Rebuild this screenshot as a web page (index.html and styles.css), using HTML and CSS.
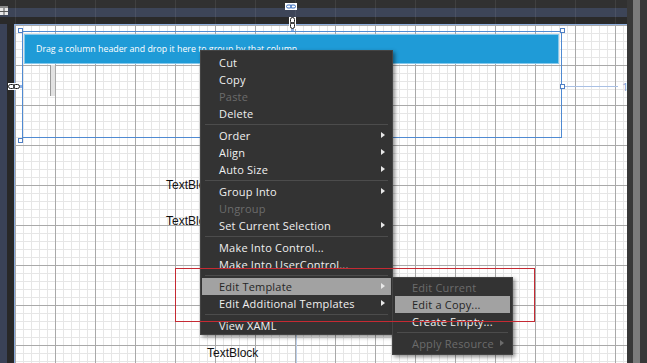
FILE: index.html
```html
<!DOCTYPE html>
<html lang="en">
<head>
    <meta charset="UTF-8">
    <title>Designer - Edit Template</title>
    <link rel="stylesheet" href="styles.css">
</head>
<body>
    <div class="designer">
        <header class="topbar">
            <div class="band band-top"></div>
            <div class="band band-mid">
                <svg class="grid-icon" width="8" height="9" viewBox="0 0 8 9">
                    <rect x="0" y="0" width="8" height="2" fill="#8a8a8a"/>
                    <rect x="0" y="2" width="8" height="7" fill="#e8e8e8"/>
                    <rect x="3.5" y="2" width="1" height="7" fill="#555"/>
                    <rect x="0" y="5" width="8" height="1" fill="#555"/>
                </svg>
            </div>
            <div class="band band-low"></div>
        </header>

        <aside class="leftbar"></aside>

        <main class="canvas">
            <div class="element selection">
                <div class="group-panel">Drag a column header and drop it here to group by that column</div>
                <div class="row-indicator"></div>

                <span class="handle h-tl"></span>
                <span class="handle h-tr"></span>
                <span class="handle h-mr"></span>
                <span class="handle h-bl"></span>

                <span class="margin-line"></span>
                <span class="margin-value">1</span>

                <span class="link-badge">
                    <svg width="12" height="7" viewBox="0 0 12 7">
                        <rect x="0" y="0" width="12" height="7" fill="#fff"/>
                        <path d="M3 2h2a1.5 1.5 0 0 1 0 3H3a1.5 1.5 0 0 1 0-3zM7 2h2a1.5 1.5 0 0 1 0 3H7a1.5 1.5 0 0 1 0-3z" fill="none" stroke="#3b6fc0" stroke-width="1"/>
                    </svg>
                </span>
                <span class="chain chain-top">
                    <svg width="7" height="14" viewBox="0 0 7 14">
                        <rect x="0" y="0" width="7" height="12" fill="#fff"/>
                        <rect x="1.5" y="0.5" width="4" height="6" rx="2" fill="none" stroke="#1a1a1a"/>
                        <rect x="1.5" y="5.5" width="4" height="6" rx="2" fill="none" stroke="#1a1a1a"/>
                        <rect x="2" y="12" width="3" height="2" fill="#8fb2e6"/>
                    </svg>
                </span>
                <span class="chain chain-left">
                    <svg width="14" height="7" viewBox="0 0 14 7">
                        <rect x="0" y="0" width="12" height="7" fill="#fff"/>
                        <rect x="0.5" y="1.5" width="6" height="4" rx="2" fill="none" stroke="#1a1a1a"/>
                        <rect x="5.5" y="1.5" width="6" height="4" rx="2" fill="none" stroke="#1a1a1a"/>
                        <rect x="12" y="2" width="2" height="3" fill="#8fb2e6"/>
                    </svg>
                </span>
            </div>

            <span class="element textblock tb-1">TextBlock</span>
            <span class="element textblock tb-2">TextBlock</span>
            <span class="element textblock tb-3">TextBlock</span>
            <span class="element guide"></span>
        </main>

        <aside class="scrollbar"><div class="track"></div></aside>
    </div>

    <div class="menu context-menu">
        <div class="item">Cut</div>
        <div class="item">Copy</div>
        <div class="item disabled">Paste</div>
        <div class="item">Delete</div>
        <div class="sep"></div>
        <div class="item sub">Order</div>
        <div class="item sub">Align</div>
        <div class="item sub">Auto Size</div>
        <div class="sep"></div>
        <div class="item sub">Group Into</div>
        <div class="item disabled">Ungroup</div>
        <div class="item sub">Set Current Selection</div>
        <div class="sep"></div>
        <div class="item">Make Into Control...</div>
        <div class="item">Make Into UserControl...</div>
        <div class="sep"></div>
        <div class="item sub active">Edit Template</div>
        <div class="item sub">Edit Additional Templates</div>
        <div class="sep"></div>
        <div class="item">View XAML</div>
    </div>

    <div class="menu submenu">
        <div class="item disabled">Edit Current</div>
        <div class="item active">Edit a Copy...</div>
        <div class="item">Create Empty...</div>
        <div class="sep"></div>
        <div class="item sub disabled">Apply Resource</div>
    </div>

    <div class="callout"></div>
</body>
</html>
```

FILE: styles.css
```css
* {
    box-sizing: border-box;
}

body {
    margin: 0;
    width: 647px;
    height: 363px;
    overflow: hidden;
    position: relative;
    background: #2d2d2d;
    font-family: 'Open Sans', 'Liberation Sans', sans-serif;
}

.designer {
    display: grid;
    grid-template-columns: 15px 612px 20px;
    grid-template-rows: 24px 339px;
}

/* top ruler bands */
.topbar {
    grid-row: 1;
    grid-column: 1 / 3;
    display: flex;
    flex-direction: column;
}

.band {
    background-image: linear-gradient(to right, rgba(255,255,255,0.07) 1px, transparent 1px);
    background-size: 40px 100%;
    background-position: 15px 0;
}

.band-top {
    height: 8px;
    background-color: #313131;
}

.band-mid {
    height: 9px;
    background-color: #3d4558;
}

.band-low {
    height: 7px;
    background-color: #2a2a2a;
}

.grid-icon {
    display: block;
    margin-top: -2px;
}

.leftbar {
    grid-row: 2;
    grid-column: 1;
    background: linear-gradient(to right, #3a4257 0, #3a4257 7px, #282828 7px, #282828 14px);
    border-right: 1px solid #86a9dc;
}

.scrollbar {
    grid-row: 1 / 3;
    grid-column: 3;
    display: flex;
    background: #383838;
    padding-left: 6px;
}

.track {
    width: 7px;
    background: #7b7b7b;
}

/* design surface */
.canvas {
    grid-row: 2;
    grid-column: 2;
    position: relative;
    background-color: #fff;
    background-image:
        linear-gradient(to right, #a9a9a9 1px, transparent 1px),
        linear-gradient(to bottom, #a9a9a9 1px, transparent 1px),
        linear-gradient(to right, #e6e6e6 1px, transparent 1px),
        linear-gradient(to bottom, #e6e6e6 1px, transparent 1px);
    background-size: 40px 40px, 40px 40px, 8px 8px, 8px 8px;
    background-position: 0 0, 0 1px, 0 0, 0 1px;
    box-shadow: inset 0 1px 0 #8fb0e0;
}

.element {
    position: absolute;
}

.selection {
    left: 7px;
    top: 7px;
    width: 540px;
    height: 107px;
    border: 1px solid #4f8ad2;
    padding: 2px 2px 0 1px;
}

.group-panel {
    height: 30px;
    line-height: 28px;
    padding-left: 11px;
    background: #1f9bd7;
    border: 1px solid #86c9ec;
    color: #fff;
    font-size: 8.8px;
    white-space: nowrap;
}

.row-indicator {
    width: 5px;
    height: 31px;
    margin: 1px 0 0 26px;
    background: #e2e2e2;
    border-left: 1px solid #9a9a9a;
}

.handle {
    position: absolute;
    width: 5px;
    height: 5px;
    background: #fff;
    border: 1px solid #4f7fc4;
}

.h-tl { left: -5px; top: -4px; }
.h-tr { left: 537px; top: -4px; }
.h-mr { left: 537px; top: 52px; }
.h-bl { left: -5px; top: 106px; }

.margin-line {
    position: absolute;
    left: 542px;
    top: 54px;
    width: 53px;
    height: 1px;
    background: #a9c0e4;
}

.margin-value {
    position: absolute;
    left: 599px;
    top: 47px;
    font-size: 11px;
    color: #7d9ed4;
}

.link-badge {
    position: absolute;
    left: 262px;
    top: -29px;
    line-height: 0;
}

.chain {
    position: absolute;
    line-height: 0;
}

.chain-top { left: 266px; top: -15px; }
.chain-left { left: -15px; top: 51px; }

.textblock {
    font-family: 'Liberation Sans', Arial, sans-serif;
    font-size: 12px;
    line-height: 14px;
    color: #111;
}

.tb-1 { left: 151px; top: 154px; }
.tb-2 { left: 151px; top: 190px; }
.tb-3 { left: 192px; top: 322px; }

.guide {
    left: 281px;
    top: 290px;
    width: 1px;
    height: 49px;
    background: #bcd0ec;
}

/* context menu */
.menu {
    position: absolute;
    background: #333;
    border: 1px solid #444;
    box-shadow: 2px 2px 4px rgba(0,0,0,0.45);
    color: #f0f0f0;
    font-size: 11px;
    letter-spacing: 0.2px;
}

.context-menu {
    left: 200px;
    top: 50px;
    width: 193px;
    padding: 3px 0 0;
}

.submenu {
    left: 392px;
    top: 277px;
    width: 121px;
    padding: 1px 0 2px;
}

.item {
    position: relative;
    height: 17px;
    line-height: 17px;
    margin: 0 1px;
    padding-left: 17px;
    white-space: nowrap;
}

.submenu .item {
    margin: 0 2px;
    padding-left: 17px;
}

.item.disabled {
    color: #6c6c6c;
}

.item.active {
    background: #a2a2a2;
    color: #262626;
}

.item.sub::after {
    content: "";
    position: absolute;
    right: 6px;
    top: 5px;
    border-left: 4px solid #e8e8e8;
    border-top: 3.5px solid transparent;
    border-bottom: 3.5px solid transparent;
}

.item.sub.disabled::after {
    border-left-color: #6c6c6c;
}

.sep {
    height: 1px;
    margin: 2px 4px;
    background: #4c4c4c;
}

.callout {
    position: absolute;
    left: 175px;
    top: 268px;
    width: 360px;
    height: 54px;
    border: 1px solid #c52a33;
}
```
